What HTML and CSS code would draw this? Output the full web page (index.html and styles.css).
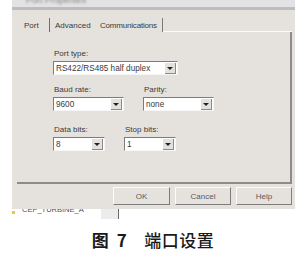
FILE: index.html
```html
<!DOCTYPE html>
<html lang="zh">
<head>
  <meta charset="UTF-8" />
  <title>端口设置</title>
  <link rel="stylesheet" href="styles.css">
</head>
<body>
  <div class="figure">
    <div class="dialog">
      <div class="titlebar"><span class="title">Port Properties</span></div>
      <div class="tabs">
        <span class="tab tab-port">Port</span>
        <span class="tab tab-adv">Advanced</span>
        <span class="tab tab-com">Communications</span>
        <span class="tab-rest"></span>
      </div>
      <div class="panel">
        <div class="row">
          <div class="field">
            <label>Port type:</label>
            <div class="combo wide"><span>RS422/RS485 half duplex</span><i class="arrow"></i></div>
          </div>
        </div>
        <div class="row">
          <div class="field">
            <label>Baud rate:</label>
            <div class="combo mid"><span>9600</span><i class="arrow"></i></div>
          </div>
          <div class="field">
            <label>Parity:</label>
            <div class="combo mid"><span>none</span><i class="arrow"></i></div>
          </div>
        </div>
        <div class="row last">
          <div class="field">
            <label>Data bits:</label>
            <div class="combo small"><span>8</span><i class="arrow"></i></div>
          </div>
          <div class="field">
            <label>Stop bits:</label>
            <div class="combo small"><span>1</span><i class="arrow"></i></div>
          </div>
        </div>
      </div>
      <div class="buttons">
        <button class="ok">OK</button>
        <button>Cancel</button>
        <button>Help</button>
      </div>
    </div>
    <div class="tree">
      <span class="node-icon"></span>
      <span class="node-name">CEP_TURBINE_A</span>
      <span class="node-box"></span>
    </div>
    <div class="caption"><b>图 7</b><span>端口设置</span></div>
  </div>
</body>
</html>
```

FILE: styles.css
```css
body {
  margin: 0;
  background: #fff;
  font-family: "Liberation Sans", Arial, sans-serif;
  color: #3a3a3a;
}
.figure {
  width: 303px;
  height: 255px;
  overflow: hidden;
}
.dialog {
  margin-left: 12px;
  width: 283px;
  height: 209px;
  background: #e5e2dd;
  display: flex;
  flex-direction: column;
}
.titlebar {
  height: 7px;
  background: #e2e2e4;
  border-bottom: 3px solid #bdbdbf;
  overflow: hidden;
}
.title {
  display: block;
  margin: -5px 0 0 14px;
  font-size: 9px;
  color: #8a8a8a;
  filter: blur(0.8px);
}
.tabs {
  display: flex;
  align-items: flex-end;
  height: 22px;
  font-size: 8px;
  line-height: 10px;
}
.tab {
  height: 14px;
  padding-top: 3px;
  box-sizing: border-box;
  white-space: nowrap;
}
.tab-port {
  width: 37px;
  padding-left: 12px;
}
.tab-adv {
  width: 51px;
  padding-left: 5px;
  border-left: 1px solid #6e6e6e;
}
.tab-com {
  width: 63px;
  letter-spacing: -0.2px;
  border-right: 1px solid #7a7a7a;
}
.tab-rest {
  flex: 1;
  margin-right: 3px;
  border-bottom: 1px solid #fbfbfb;
}
.panel {
  height: 152px;
  margin: 0 3px 0 5px;
  padding: 17px 0 0 36px;
  box-sizing: border-box;
  border-right: 2px solid #8c8c8c;
  border-bottom: 2px solid #8c8c8c;
  display: flex;
  flex-direction: column;
  gap: 10px;
}
.row {
  display: flex;
  gap: 19px;
}
.row.last {
  margin-top: 4px;
}
.field label {
  display: block;
  font-size: 8px;
  line-height: 10px;
  margin: 0 0 2px 1px;
}
.combo {
  height: 14px;
  box-sizing: border-box;
  background: #fff;
  border-top: 1px solid #7c7c7c;
  border-left: 1px solid #7c7c7c;
  border-right: 1px solid #f6f6f6;
  border-bottom: 1px solid #f6f6f6;
  display: flex;
  align-items: center;
  font-size: 8.2px;
}
.combo span {
  flex: 1;
  padding-left: 2px;
  white-space: nowrap;
}
.combo.wide { width: 125px; }
.combo.mid { width: 71px; }
.combo.small { width: 52px; }
.arrow {
  width: 11px;
  height: 11px;
  margin-right: 1px;
  background: #e3e1dd;
  border-right: 1px solid #8a8a8a;
  border-bottom: 1px solid #8a8a8a;
  box-sizing: border-box;
  position: relative;
}
.arrow::after {
  content: "";
  position: absolute;
  left: 2px;
  top: 4px;
  border-left: 3px solid transparent;
  border-right: 3px solid transparent;
  border-top: 3px solid #222;
}
.buttons {
  display: flex;
  justify-content: flex-end;
  gap: 5px;
  padding: 3px 3px 0 0;
}
button {
  width: 56px;
  height: 18px;
  padding: 0;
  font-family: inherit;
  font-size: 8px;
  color: #5a5a5a;
  background: #e5e2dd;
  border: 1px solid;
  border-color: #fbfbfb #7d7d7d #7d7d7d #fbfbfb;
}
button.ok {
  width: 57px;
}
.tree {
  display: flex;
  align-items: flex-start;
  height: 11px;
  overflow: hidden;
  font-size: 7.5px;
  line-height: 10px;
  color: #46506a;
}
.node-icon {
  width: 3px;
  height: 3px;
  margin: 2px 7px 0 12px;
  background: #e8c84c;
}
.node-name {
  width: 79px;
  margin-top: -4px;
}
.node-box {
  width: 17px;
  height: 10px;
  background: #ececec;
  border-right: 1px solid #6a6a6a;
}
.caption {
  display: flex;
  justify-content: center;
  gap: 17px;
  margin-top: 9px;
  padding-left: 3px;
  font-family: "Noto Sans CJK SC", sans-serif;
  font-size: 17px;
  line-height: 22px;
  font-weight: 500;
  color: #1a1a1a;
  letter-spacing: 0.5px;
}
.caption b {
  font-weight: 600;
  word-spacing: 3px;
}
```
